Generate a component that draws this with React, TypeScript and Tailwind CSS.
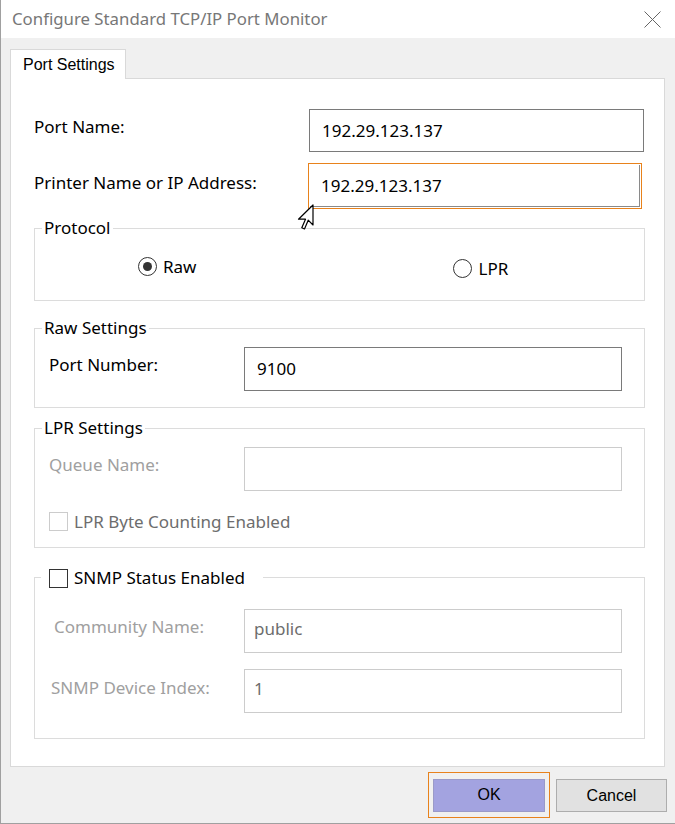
import React from "react";

const font = { fontFamily: '"Noto Sans", "Liberation Sans", sans-serif' };
const arial = { fontFamily: '"Liberation Sans", Arial, sans-serif' };

function Radio({ checked, label }: { checked: boolean; label: string }) {
  return (
    <div className="flex items-center gap-[6px]">
      <div className="w-[19px] h-[19px] rounded-full border border-[#333] flex items-center justify-center bg-white">
        {checked && <div className="w-[9px] h-[9px] rounded-full bg-[#333]" />}
      </div>
      <span className="text-[17px] text-black leading-none">{label}</span>
    </div>
  );
}

function Group({
  legend,
  h,
  children,
  legendNode,
}: {
  legend?: string;
  h: string;
  children?: React.ReactNode;
  legendNode?: React.ReactNode;
}) {
  return (
    <div className={`relative border border-[#dcdcdc] ${h}`}>
      {legend && (
        <span className="absolute left-[7px] top-[-12px] bg-white px-[2px] text-[17px] leading-[22px] text-black">
          {legend}
        </span>
      )}
      {legendNode}
      {children}
    </div>
  );
}

export default function App() {
  return (
    <div
      style={font}
      className="w-[675px] h-[824px] bg-[#f0f0f0] flex flex-col border-l border-b border-[#a0a0a0] relative overflow-hidden"
    >
      {/* Title bar */}
      <div className="h-[38px] bg-white flex items-center justify-between pl-[11px] pr-[14px] shrink-0">
        <span className="text-[16.8px] text-[#777]">Configure Standard TCP/IP Port Monitor</span>
        <svg width="17" height="17" viewBox="0 0 17 17" className="mt-[1px]">
          <path d="M0.5 0.5 L16.5 16.5 M16.5 0.5 L0.5 16.5" stroke="#666" strokeWidth="1" fill="none" />
        </svg>
      </div>

      {/* Body */}
      <div className="flex-1 flex flex-col pl-[9px] pt-[11px]">
        {/* Tab */}
        <div className="relative z-10 -mb-px w-[116px] h-[30px] bg-white border border-b-0 border-[#d9d9d9] pl-[12px] flex items-center">
          <span style={arial} className="text-[16px] text-black">Port Settings</span>
        </div>
        {/* Panel */}
        <div className="w-[655px] h-[689px] bg-white border border-[#d9d9d9] pl-[23px] pr-[19px] flex flex-col">
          {/* Port name */}
          <div className="flex mt-[30px] h-[43px]">
            <div className="w-[275px] pt-[5px] text-[17px] text-black">Port Name:</div>
            <div className="w-[335px] h-[43px] border border-[#7a7a7a] flex items-center pl-[12px] text-[17px] text-black">
              192.29.123.137
            </div>
          </div>
          {/* IP */}
          <div className="flex mt-[11px] h-[46px]">
            <div className="w-[274px] pt-[7px] text-[17px] text-black">Printer Name or IP Address:</div>
            <div className="w-[334px] h-[46px] border border-[#e8821c] p-px">
              <div className="w-full h-full border-r border-b border-[#8a8a8a] flex items-center pl-[11px] text-[17px] text-black">
                192.29.123.137
              </div>
            </div>
          </div>

          {/* Protocol */}
          <div className="mt-[19px]">
            <Group legend="Protocol" h="h-[73px]">
              <div className="flex pt-[28px]">
                <div className="ml-[103px]">
                  <Radio checked label="Raw" />
                </div>
                <div className="ml-[257px] mt-[2px]">
                  <Radio checked={false} label="LPR" />
                </div>
              </div>
            </Group>
          </div>

          {/* Raw Settings */}
          <div className="mt-[27px]">
            <Group legend="Raw Settings" h="h-[80px]">
              <div className="flex pt-[18px] pl-[14px]">
                <div className="w-[195px] pt-[5px] text-[17px] text-black">Port Number:</div>
                <div className="w-[378px] h-[44px] border border-[#7a7a7a] flex items-center pl-[12px] text-[17px] text-black">
                  9100
                </div>
              </div>
            </Group>
          </div>

          {/* LPR Settings */}
          <div className="mt-[20px]">
            <Group legend="LPR Settings" h="h-[120px]">
              <div className="flex pt-[18px] pl-[14px]">
                <div className="w-[195px] pt-[5px] text-[17px] text-[#a0a0a0]">Queue Name:</div>
                <div className="w-[378px] h-[44px] border border-[#cccccc]" />
              </div>
              <div className="flex items-center gap-[6px] pl-[14px] mt-[18px]">
                <div className="w-[19px] h-[19px] border border-[#cccccc] bg-white" />
                <span className="text-[17px] text-[#6d6d6d]">LPR Byte Counting Enabled</span>
              </div>
            </Group>
          </div>

          {/* SNMP */}
          <div className="mt-[29px]">
            <Group
              h="h-[162px]"
              legendNode={
                <div className="absolute left-[6px] top-[-11px] bg-white pl-[8px] pr-[18px] flex items-center gap-[6px]">
                  <div className="w-[19px] h-[19px] border border-[#333] bg-white" />
                  <span className="text-[17px] leading-[22px] text-black">SNMP Status Enabled</span>
                </div>
              }
            >
              <div className="flex pt-[31px] pl-[19px]">
                <div className="w-[190px] pt-[5px] text-[17px] text-[#a0a0a0]">Community Name:</div>
                <div className="w-[378px] h-[44px] border border-[#cccccc] flex items-center pl-[9px] pb-[4px] text-[17px] text-[#6d6d6d]">
                  public
                </div>
              </div>
              <div className="flex pt-[16px] pl-[16px]">
                <div className="w-[193px] pt-[6px] text-[17px] text-[#a0a0a0]">SNMP Device Index:</div>
                <div className="w-[378px] h-[44px] border border-[#cccccc] flex items-center pl-[9px] pb-[4px] text-[17px] text-[#6d6d6d]">
                  1
                </div>
              </div>
            </Group>
          </div>
        </div>

        {/* Buttons */}
        <div className="flex mt-[5px] pl-[418px]" style={arial}>
          <div className="w-[122px] h-[46px] border border-[#e8821c] flex items-center justify-center">
            <button className="w-[112px] h-[33px] bg-[#a3a3e0] border border-[#9a9ac8] text-[16px] text-black">
              OK
            </button>
          </div>
          <button className="ml-[6px] mt-[7px] w-[111px] h-[33px] bg-[#e1e1e1] border border-[#adadad] text-[16px] text-black">
            Cancel
          </button>
        </div>
      </div>

      {/* Mouse cursor */}
      <svg
        className="absolute left-[295px] top-[204px]"
        width="20"
        height="28"
        viewBox="0 0 20 28"
      >
        <path
          d="M17 1 L17 21 L12.2 16.2 L8.5 25 L5.8 23.8 L9.5 15.2 L2.5 15.2 Z"
          fill="white"
          stroke="black"
          strokeWidth="1.2"
          strokeLinejoin="round"
        />
      </svg>
    </div>
  );
}
